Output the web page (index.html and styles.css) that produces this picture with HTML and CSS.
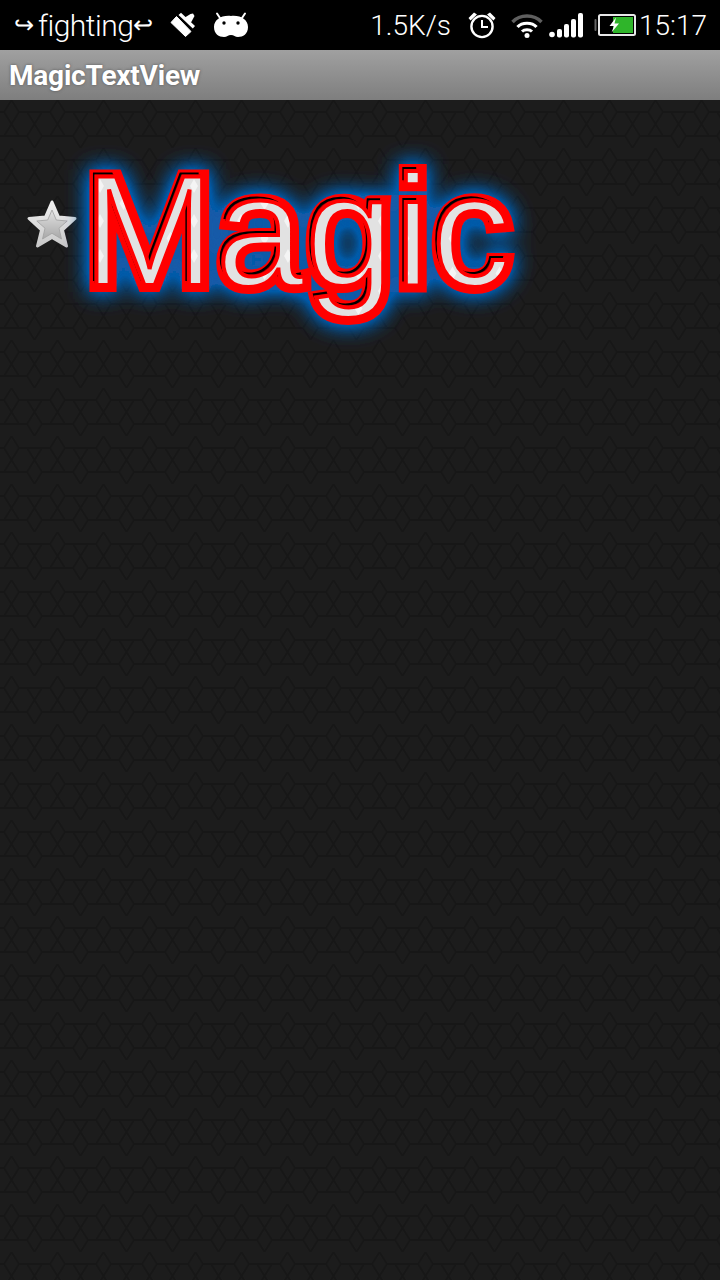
FILE: index.html
```html
<!DOCTYPE html>
<html lang="en">
<head>
<meta charset="utf-8">
<title>MagicTextView</title>
<link rel="stylesheet" href="styles.css">
</head>
<body>
<div class="app">
  <header class="status">
    <div class="status-left">
      <span class="carrier"><span class="arrow">↪</span>fighting<span class="arrow">↩</span></span>
      <svg class="ic-brush" viewBox="0 0 26 26"><path d="M1 10.500 L6.500 4.500 L21 19.500 L15.500 24.500 Z" fill="#fff" stroke="#fff" stroke-linejoin="round"/><path d="M8.500 3 L11 0.800 L25 14 L22.800 16.500 Z" fill="#fff"/><path d="M14 6 L20.500 2 L23 1.500 L24.500 4 L21 10.500 Z" fill="#fff"/></svg>
      <svg class="ic-droid" viewBox="0 0 36 26"><path d="M7 6 L4 1.500 M29 6 L32 1.500" stroke="#fff" stroke-width="2" stroke-linecap="round"/><path d="M18 4 C28 3 35 8 35 15 C35 22 30 25 25 25 C22 25 21 23 18 23 C15 23 14 25 11 25 C6 25 1 22 1 15 C1 8 8 3 18 4 Z" fill="#fff"/><circle cx="11" cy="11" r="1.700" fill="#000"/><circle cx="25" cy="11" r="1.700" fill="#000"/></svg>
    </div>
    <div class="status-right">
      <span class="speed">1.5K/s</span>
      <svg class="ic-alarm" viewBox="0 0 30 28"><circle cx="15" cy="15.500" r="10.600" fill="none" stroke="#fff" stroke-width="2.400"/><path d="M15 9 V16 H21" fill="none" stroke="#fff" stroke-width="2"/><path d="M1.500 7 L7 1.500 L10 3.500 L3.500 9.500 Z M28.500 7 L23 1.500 L20 3.500 L26.500 9.500 Z" fill="#fff"/></svg>
      <svg class="ic-wifi" viewBox="0 0 32 26"><path d="M1.500 10 C9 2 23 2 30.500 10" fill="none" stroke="#5f5f5f" stroke-width="3.400"/><path d="M6.500 15 C11 10 21 10 25.500 15" fill="none" stroke="#fff" stroke-width="3.200"/><path d="M11 19.500 C13.500 17 18.500 17 21 19.500" fill="none" stroke="#fff" stroke-width="3"/><circle cx="16" cy="23.500" r="2.500" fill="#fff"/></svg>
      <svg class="ic-signal" viewBox="0 0 34 26"><circle cx="3" cy="22.500" r="2.800" fill="#fff"/><rect x="8" y="17" width="5" height="8.500" rx="2" fill="#fff"/><rect x="15" y="12" width="5" height="13.500" rx="2" fill="#fff"/><rect x="22" y="7" width="5" height="18.500" rx="2" fill="#fff"/><rect x="29" y="1" width="5" height="24.500" rx="2" fill="#fff"/></svg>
      <svg class="ic-battery" viewBox="0 0 42 24"><rect x="0.500" y="6" width="2" height="12" rx="1" fill="#666"/><rect x="5" y="2" width="36" height="20" rx="1.500" fill="none" stroke="#e8e8e8" stroke-width="2"/><rect x="19" y="4" width="20" height="16" fill="#2fb52a"/><path d="M22 4.500 L15.500 13 H20 L17.500 19.500 L25 10.500 H20.500 Z" fill="#fff"/></svg>
      <span class="clock">15:17</span>
    </div>
  </header>
  <div class="titlebar">MagicTextView</div>
  <main class="content">
    <svg class="star" viewBox="0 0 52 52">
      <defs>
        <linearGradient id="starFace" x1="0" y1="0" x2="0" y2="1"><stop offset="0" stop-color="#e2e2e2"/><stop offset="1" stop-color="#a8a8a8"/></linearGradient>
        <linearGradient id="starRim" x1="0" y1="0" x2="0" y2="1"><stop offset="0" stop-color="#f0f0f0"/><stop offset="1" stop-color="#c8c8c8"/></linearGradient>
      </defs>
      <path d="M26 3 L32.500 18 L49 19.500 L36.500 31 L40.500 47 L26 38.500 L11.500 47 L15.500 31 L3 19.500 L19.500 18 Z" fill="url(#starRim)" stroke="url(#starRim)" stroke-width="3" stroke-linejoin="round"/>
      <path d="M26 11 L30.300 21 L41.200 22 L33 29.200 L35.500 40 L26 34.300 L16.500 40 L19 29.200 L10.800 22 L21.700 21 Z" fill="url(#starFace)" stroke="#a0a0a0" stroke-width="0.800" stroke-linejoin="round"/>
    </svg>
    <svg class="magic" viewBox="0 0 470 210" width="470" height="210">
      <defs>
        <pattern id="diamonds" width="47" height="35" patternUnits="userSpaceOnUse" patternTransform="translate(6 -10)">
          <rect width="47" height="35" fill="#e2e2e2"/>
          <path d="M10 4 L14 11 L10 18 L6 11 Z M33.500 21.500 L37.500 28.500 L33.500 35 L29.500 28.500 Z" fill="#f4f4f4"/>
        </pattern>
        <filter id="glow" x="-15%" y="-30%" width="130%" height="160%">
          <feGaussianBlur stdDeviation="11"/>
          <feComponentTransfer><feFuncA type="linear" slope="2.200"/></feComponentTransfer>
        </filter>
      </defs>
      <text class="word layer-glow" x="-0.500" y="134.500" filter="url(#glow)">Magic</text>
      <text class="word layer-stroke" x="-0.500" y="134.500">Magic</text>
      <text class="word layer-black" x="-4" y="131">Magic</text>
      <text class="word layer-dark" x="-2.500" y="132.500">Magic</text>
      <text class="word layer-face" x="-0.500" y="134.500" fill="url(#diamonds)">Magic</text>
      <text class="word layer-edge" x="-0.500" y="134.500">Magic</text>
    </svg>
  </main>
</div>
</body>
</html>
```
FILE: styles.css
```css
html, body { margin: 0; padding: 0; background: #1a1a1a; }
.app { width: 720px; height: 1280px; display: flex; flex-direction: column; overflow: hidden; }
.status { height: 50px; flex: none; background: #000; color: #fff; display: flex; justify-content: space-between; align-items: center; padding: 0 13px 0 14px; font-family: Roboto, "Liberation Sans", sans-serif; font-weight: 300; }
.status-left, .status-right { display: flex; align-items: center; }
.carrier { font-size: 30px; letter-spacing: -0.5px; display: flex; align-items: center; }
.arrow { font-family: "DejaVu Sans", sans-serif; font-size: 24px; width: 24px; }
.speed, .clock { font-size: 28px; }
.ic-brush { width: 26px; height: 26px; margin-left: 13px; }
.ic-droid { width: 36px; height: 26px; margin-left: 17px; }
.ic-alarm { width: 30px; height: 28px; margin-left: 16px; }
.ic-wifi { width: 32px; height: 26px; margin-left: 14px; }
.ic-signal { width: 34px; height: 26px; margin-left: 6px; }
.ic-battery { width: 42px; height: 24px; margin-left: 11px; margin-right: 3px; }
.titlebar { height: 50px; flex: none; box-sizing: border-box; padding-left: 9px; background: linear-gradient(#a0a0a0, #7e7e7e); color: #fff; font: 700 28px/52px Roboto, "Liberation Sans", sans-serif; letter-spacing: -0.2px; text-shadow: 0 0 3px #555; }
.content { flex: 1; display: flex; align-items: flex-start; padding: 50px 0 0 26px; background-color: #1c1c1c;
  background-image: url("data:image/svg+xml,%3Csvg xmlns='http://www.w3.org/2000/svg' width='46' height='48'%3E%3Cpath d='M11.500 0L19 12L11.500 24L4 12ZM34.500 24L42 36L34.500 48L27 36ZM19 12H50M-4 12H4M-4 36H19M42 36H50M19 36H27M34.500 24L27 12M34.500 24L42 12M11.500 24L4 36M11.500 24L19 36' fill='none' stroke='%23171717' stroke-width='2'/%3E%3C/svg%3E"); }
.star { width: 52px; height: 52px; margin-top: 49px; flex: none; }
.magic { flex: none; margin-left: 6px; overflow: visible; }
.word { font-family: "Liberation Sans", Arial, sans-serif; font-size: 158px; letter-spacing: 1.500px; }
.layer-glow { fill: #0a5aa8; stroke: #0a5aa8; stroke-width: 14px; }
.layer-stroke { fill: #ff0000; stroke: #ff0000; stroke-width: 14px; stroke-linejoin: miter; stroke-miterlimit: 2.500; }
.layer-black { fill: #000; }
.layer-dark { fill: #900000; }
.layer-edge { fill: none; stroke: #ff0000; stroke-width: 4px; stroke-linejoin: miter; stroke-miterlimit: 2.500; }
```
